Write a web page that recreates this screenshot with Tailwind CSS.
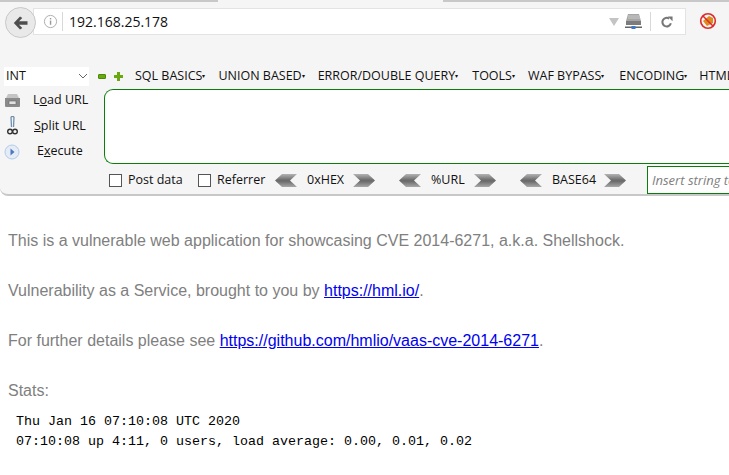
<!DOCTYPE html>
<html lang="en">
<head>
  <meta charset="UTF-8" />
  <title>Shellshock</title>
  <script src="https://cdn.jsdelivr.net/npm/@tailwindcss/browser@4"></script>
</head>
<body class="bg-white h-[475px] w-[729px] overflow-hidden font-['Liberation_Sans',sans-serif]">
  <svg class="absolute" width="0" height="0">
    <defs>
      <linearGradient id="arrowFill" x1="0" y1="0" x2="0" y2="1">
        <stop offset="0" stop-color="#b4b4b4"/>
        <stop offset="0.45" stop-color="#6e6e6e"/>
        <stop offset="0.55" stop-color="#6a6a6a"/>
        <stop offset="1" stop-color="#a8a8a8"/>
      </linearGradient>
    </defs>
  </svg>

  <!-- browser chrome -->
  <div class="h-[2px] bg-[#f5f5f5] flex">
    <div class="w-[218px] bg-[#c8c8c8]"></div>
    <div class="ml-[225px] flex-1 bg-[#c8c8c8]"></div>
  </div>
  <div class="h-[60px] bg-[#f5f5f5] flex items-start pt-[5px] pl-[5px]">
    <div class="relative z-10 w-[31px] h-[31px] rounded-full bg-[#e9e9e9] border border-[#c8c8c8] flex items-center justify-center shrink-0">
      <svg width="15" height="14" viewBox="0 0 15 14"><path d="M7 0.5 L0.8 7 L7 13.5 L9.3 12 L6 8.8 H14.5 V5.2 H6 L9.3 2 Z" fill="#4e4e4e"/></svg>
    </div>
    <div class="-ml-[3px] mt-[1px] w-[653px] h-[27px] bg-white border border-[#e3e3e3] flex items-center pr-[12px]">
      <svg class="ml-[9px]" width="15" height="15" viewBox="0 0 16 16"><circle cx="8" cy="8" r="6.5" fill="none" stroke="#aaa"/><rect x="7.3" y="7" width="1.5" height="4.5" fill="#999"/><rect x="7.3" y="4.3" width="1.5" height="1.5" fill="#999"/></svg>
      <div class="w-px h-[19px] bg-[#d8d8d8] ml-[4px]"></div>
      <span class="ml-[6px] text-[14px] text-[#111] font-['Open_Sans',sans-serif]">192.168.25.178</span>
      <svg class="ml-auto" width="10" height="8" viewBox="0 0 10 8"><path d="M0 0 H10 L5 8 Z" fill="#c4c4c4"/></svg>
      <svg class="ml-[6px]" width="17" height="17" viewBox="0 0 17 17"><path d="M3 1 H14 L16 8 H1 Z" fill="#a6a6a6"/><path d="M3 3 H14 M3 5 H15" stroke="#c9c9c9"/><rect x="1" y="8" width="15" height="4" fill="#7c7c7c"/><rect x="0" y="13.5" width="17" height="1.5" fill="#666"/><rect x="6.5" y="13" width="4" height="3" fill="#3a78c8"/></svg>
      <div class="w-px h-[19px] bg-[#d8d8d8] ml-[8px]"></div>
      <svg class="ml-[10px]" width="12" height="12" viewBox="0 0 14 14"><path d="M11.5 8.5 A5 5 0 1 1 9.5 3" fill="none" stroke="#777" stroke-width="2.4"/><path d="M8 0.5 L13.5 0.5 L13.5 6 Z" fill="#777"/></svg>
    </div>
    <svg class="ml-[13px] mt-[5px]" width="18" height="18" viewBox="0 0 18 18"><path d="M4 9 L10 4 L14 6 L14 11 L8 14 Z" fill="#e08a1e"/><circle cx="9" cy="9" r="7.3" fill="none" stroke="#dd2a2a" stroke-width="1.6"/><path d="M4 4 L14 14" stroke="#dd2a2a" stroke-width="1.5"/></svg>
  </div>

  <!-- hackbar -->
  <div class="h-[134px] bg-[#f5f5f5] border-b-2 border-[#c8c8c8] rounded-bl-[8px] text-[12.5px] text-[#111] font-['Open_Sans',sans-serif] overflow-hidden">
    <div class="flex items-center h-[26px] pt-[2px] whitespace-nowrap overflow-hidden">
      <div class="ml-[4px] w-[85px] h-[19px] bg-white flex items-center justify-between pl-[2px] pr-[1px] shrink-0">
        <span>INT</span>
        <svg width="10" height="6" viewBox="0 0 10 6"><path d="M1 1 L5 5 L9 1" fill="none" stroke="#666"/></svg>
      </div>
      <div class="ml-[9px] w-[8px] h-[5px] bg-[#6aa812] border border-[#4c8a00] rounded-[1px] shrink-0"></div>
      <svg class="ml-[8px] shrink-0" width="9" height="9" viewBox="0 0 9 9"><path d="M3 0 H6 V3 H9 V6 H6 V9 H3 V6 H0 V3 H3 Z" fill="#6aa812"/></svg>
      <div class="ml-[12px] flex gap-[13px] shrink-0">
        <span>SQL BASICS<i class="not-italic text-[6px] align-middle">▾</i></span>
        <span>UNION BASED<i class="not-italic text-[6px] align-middle">▾</i></span>
        <span>ERROR/DOUBLE QUERY<i class="not-italic text-[6px] align-middle">▾</i></span>
        <span class="ml-[1px]">TOOLS<i class="not-italic text-[6px] align-middle">▾</i></span>
        <span>WAF BYPASS<i class="not-italic text-[6px] align-middle">▾</i></span>
        <span class="ml-[2px]">ENCODING<i class="not-italic text-[6px] align-middle">▾</i></span>
        <span class="-ml-[1px]">HTML</span>
      </div>
    </div>
    <div class="flex">
      <div class="w-[104px] shrink-0 flex flex-col -mt-[1px]">
        <div class="h-[26px] flex items-center pl-[4px]">
          <svg width="17" height="15" viewBox="0 0 17 15"><path d="M4 1 H13 L15 5 H2 Z" fill="#c4c4c4"/><path d="M1 5 H16 V13 Q16 14 15 14 H2 Q1 14 1 13 Z" fill="#8a8a8a"/><rect x="5" y="8" width="7" height="3.5" fill="#e2e2e2" stroke="#666" stroke-width="0.6"/></svg>
          <span class="ml-[12px]">L<u>o</u>ad URL</span>
        </div>
        <div class="h-[26px] flex items-center pl-[6px]">
          <svg width="13" height="20" viewBox="0 0 13 20"><path d="M5 1 L5.5 11 M8 1 L7.5 11 M5 1 Q6.5 -0.5 8 1" stroke="#6d8fb0" stroke-width="1.3" fill="none"/><circle cx="4" cy="15.5" r="2.3" fill="none" stroke="#333" stroke-width="1.4"/><circle cx="9" cy="15.5" r="2.3" fill="none" stroke="#333" stroke-width="1.4"/></svg>
          <span class="ml-[15px]"><u>S</u>plit URL</span>
        </div>
        <div class="h-[25px] flex items-center pl-[4px]">
          <svg width="16" height="16" viewBox="0 0 16 16"><circle cx="8" cy="8" r="7" fill="#e4ecf8" stroke="#b5c9e6"/><path d="M6.5 4.5 L10.5 8 L6.5 11.5 Z" fill="#4a78b8"/></svg>
          <span class="ml-[17px]">E<u>x</u>ecute</span>
        </div>
      </div>
      <div class="flex-1 h-[75px] bg-white border border-r-0 border-[#0a7d0a] rounded-l-[9px] mt-[1px]"></div>
    </div>
    <div class="flex items-center h-[28px] mt-[2px] pl-[109px] whitespace-nowrap overflow-hidden">
      <div class="w-[13px] h-[13px] border border-[#555] bg-white shrink-0"></div>
      <span class="ml-[6px] w-[54px] pt-[1px]">Post data</span>
      <div class="ml-[16px] w-[13px] h-[13px] border border-[#555] bg-white shrink-0"></div>
      <span class="ml-[6px] w-[46px] pt-[1px]">Referrer</span>
      <svg class="ml-[12px] shrink-0" width="22" height="13" viewBox="0 0 22 13"><path d="M7 0 H22 L15 6.5 L22 13 H7 L0 6.5 Z" fill="url(#arrowFill)"/></svg>
      <span class="ml-[10px] w-[37px]">0xHEX</span>
      <svg class="ml-[9px] shrink-0" width="22" height="13" viewBox="0 0 22 13"><path d="M0 0 H15 L22 6.5 L15 13 H0 L7 6.5 Z" fill="url(#arrowFill)"/></svg>
      <svg class="ml-[24px] shrink-0" width="22" height="13" viewBox="0 0 22 13"><path d="M7 0 H22 L15 6.5 L22 13 H7 L0 6.5 Z" fill="url(#arrowFill)"/></svg>
      <span class="ml-[10px] w-[33px]">%URL</span>
      <svg class="ml-[10px] shrink-0" width="22" height="13" viewBox="0 0 22 13"><path d="M0 0 H15 L22 6.5 L15 13 H0 L7 6.5 Z" fill="url(#arrowFill)"/></svg>
      <svg class="ml-[24px] shrink-0" width="22" height="13" viewBox="0 0 22 13"><path d="M7 0 H22 L15 6.5 L22 13 H7 L0 6.5 Z" fill="url(#arrowFill)"/></svg>
      <span class="ml-[10px] w-[43px]">BASE64</span>
      <svg class="ml-[9px] shrink-0" width="22" height="13" viewBox="0 0 22 13"><path d="M0 0 H15 L22 6.5 L15 13 H0 L7 6.5 Z" fill="url(#arrowFill)"/></svg>
      <div class="ml-[21px] h-[28px] flex-1 bg-white border border-r-0 border-[#0a7d0a] flex items-center pl-[4px] pt-[2px] italic text-[13px] text-[#808080] overflow-hidden">Insert string to replace</div>
    </div>
  </div>

  <!-- page content -->
  <div class="pl-[8px] pt-[36px] text-[16px] leading-[18px] text-[#808080]">
    <p>This is a vulnerable web application for showcasing CVE 2014-6271, a.k.a. Shellshock.</p>
    <p class="mt-[32px]">Vulnerability as a Service, brought to you by <a class="text-[#0000ee] underline">https://hml.io/</a>.</p>
    <p class="mt-[32px]">For further details please see <a class="text-[#0000ee] underline">https://github.com/hmlio/vaas-cve-2014-6271</a>.</p>
    <p class="mt-[32px]">Stats:</p>
    <pre class="mt-[12px] pl-[8px] text-[13.33px] leading-[20px] text-black font-['Liberation_Mono',monospace]">Thu Jan 16 07:10:08 UTC 2020
07:10:08 up 4:11, 0 users, load average: 0.00, 0.01, 0.02</pre>
  </div>
</body>
</html>
